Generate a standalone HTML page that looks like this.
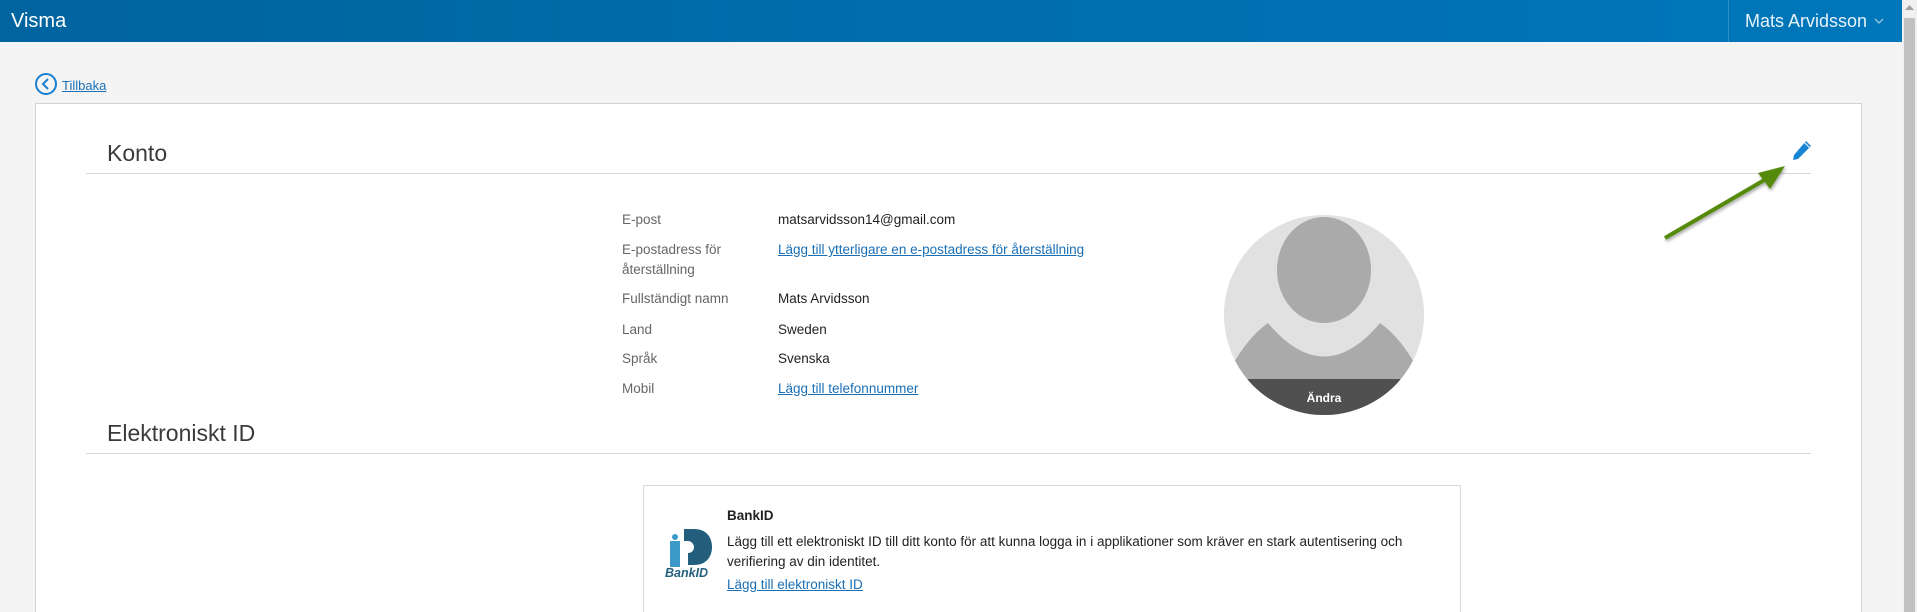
<!DOCTYPE html>
<html><head><meta charset="utf-8"><style>
*{margin:0;padding:0;box-sizing:border-box}
html,body{width:1917px;height:612px;overflow:hidden;background:#f4f4f4;font-family:"Liberation Sans",Arial,sans-serif}
.hdr{position:absolute;left:0;top:0;width:1902px;height:42px;background:linear-gradient(90deg,#00649f,#0077bb)}
.brand{position:absolute;left:11px;top:10px;color:#fff;font-size:20px}
.div{position:absolute;left:1728px;top:0;width:1px;height:42px;background:rgba(255,255,255,.18)}
.user{position:absolute;left:1745px;top:11px;color:#e8f2fa;font-size:18px}
.sb{position:absolute;left:1902px;top:0;width:15px;height:612px;background:#f0f0f0}
.thumb{position:absolute;left:1904px;top:18px;width:11px;height:594px;background:#c1c1c1}
.back{position:absolute;left:35px;top:73px;width:22px;height:22px;border:2px solid #1a7fd0;border-radius:50%}
.backt{position:absolute;left:62px;top:78px;font-size:13px;color:#1a6fb5;text-decoration:underline}
.card{position:absolute;left:35px;top:103px;width:1827px;height:509px;background:#fff;border:1px solid #d3d3d3;border-bottom:none}
.h{position:absolute;left:107px;font-size:23px;color:#3a3a3a;font-weight:300}
.line{position:absolute;left:86px;width:1725px;height:1px;background:#d6d6d6}
.lab{position:absolute;left:622px;font-size:13.5px;color:#666;line-height:20px}
.val{position:absolute;left:778px;font-size:13.5px;color:#222;line-height:20px}
a{color:#1a6fb5;text-decoration:underline}
.box{position:absolute;left:643px;top:485px;width:818px;height:127px;border:1px solid #d8d8d8;border-bottom:none;background:#fff}
</style></head><body>
<div class="hdr"><div class="brand">Visma</div><div class="div"></div><div class="user">Mats Arvidsson</div>
<svg style="position:absolute;left:1874px;top:18px" width="10" height="7"><path d="M1 1l4 4 4-4" stroke="#9cc3e0" fill="none" stroke-width="1.3"/></svg></div>
<div class="sb"></div><div class="thumb"></div>
<svg style="position:absolute;left:1905px;top:5px" width="9" height="6"><path d="M0 5h9L4.5 0z" fill="#a0a0a0"/></svg>
<div class="back"></div>
<svg style="position:absolute;left:35px;top:73px" width="22" height="22"><path d="M13 6l-5 5 5 5" stroke="#1a7fd0" stroke-width="2" fill="none"/></svg>
<div class="backt">Tillbaka</div>
<div class="card"></div>
<div class="h" style="top:140px">Konto</div>
<div class="line" style="top:173px"></div>
<svg style="position:absolute;left:1789px;top:139px" width="24" height="24" viewBox="0 0 24 24"><path d="M17 2l5 5L9 20l-5 1 1-5z" fill="#1a84d4"/><path d="M15.5 3.5l5 5" stroke="#fff" stroke-width="1"/></svg>
<svg style="position:absolute;left:1655px;top:155px" width="140" height="90"><defs><filter id="s"><feDropShadow dx="1" dy="2" stdDeviation="1.5" flood-opacity=".35"/></filter></defs><g filter="url(#s)"><path d="M10 83L118 20" stroke="#548a0c" stroke-width="4"/><path d="M130 11L103 18L115 34z" fill="#548a0c"/></g></svg>
<div class="lab" style="top:210px">E-post</div><div class="val" style="top:210px">matsarvidsson14@gmail.com</div>
<div class="lab" style="top:240px">E-postadress för<br>återställning</div><div class="val" style="top:240px"><a>Lägg till ytterligare en e-postadress för återställning</a></div>
<div class="lab" style="top:289px">Fullständigt namn</div><div class="val" style="top:289px">Mats Arvidsson</div>
<div class="lab" style="top:320px">Land</div><div class="val" style="top:320px">Sweden</div>
<div class="lab" style="top:349px">Språk</div><div class="val" style="top:349px">Svenska</div>
<div class="lab" style="top:379px">Mobil</div><div class="val" style="top:379px"><a>Lägg till telefonnummer</a></div>
<svg style="position:absolute;left:1224px;top:215px" width="200" height="200" viewBox="0 0 200 200"><defs><clipPath id="c"><circle cx="100" cy="100" r="100"/></clipPath></defs><g clip-path="url(#c)"><rect width="200" height="200" fill="#e1e1e1"/><ellipse cx="100" cy="55" rx="47" ry="53" fill="#aaaaaa"/><path d="M44 108Q100 175 156 108Q188 130 215 200L-15 200Q12 130 44 108Z" fill="#aaaaaa"/><rect y="164" width="200" height="40" fill="#505050"/></g><text x="100" y="187" text-anchor="middle" fill="#fff" font-size="12" font-weight="bold" font-family="Liberation Sans,sans-serif">Ändra</text></svg>
<div class="h" style="top:420px">Elektroniskt ID</div>
<div class="line" style="top:453px"></div>
<div class="box"></div>
<svg style="position:absolute;left:664px;top:527px" width="52" height="52" viewBox="0 0 52 52"><path d="M6 14h10v26H6z" fill="#3d9ac8"/><circle cx="11" cy="10" r="3" fill="#3d9ac8"/><path d="M20 2h10c12 0 18 8 18 18s-6 18-18 18h-6V26c4 0 6-3 6-6s-3-6-6-6h-4z" fill="#235f7d"/><text x="1" y="50" font-size="12.5" font-weight="bold" font-style="italic" fill="#235f7d" font-family="Liberation Sans,sans-serif">BankID</text></svg>
<div style="position:absolute;left:727px;top:508px;font-size:13.5px;font-weight:bold;color:#222">BankID</div>
<div style="position:absolute;left:727px;top:532px;font-size:13.5px;color:#222;line-height:20px">Lägg till ett elektroniskt ID till ditt konto för att kunna logga in i applikationer som kräver en stark autentisering och<br>verifiering av din identitet.</div>
<div style="position:absolute;left:727px;top:577px;font-size:13.5px"><a>Lägg till elektroniskt ID</a></div>
</body></html>
